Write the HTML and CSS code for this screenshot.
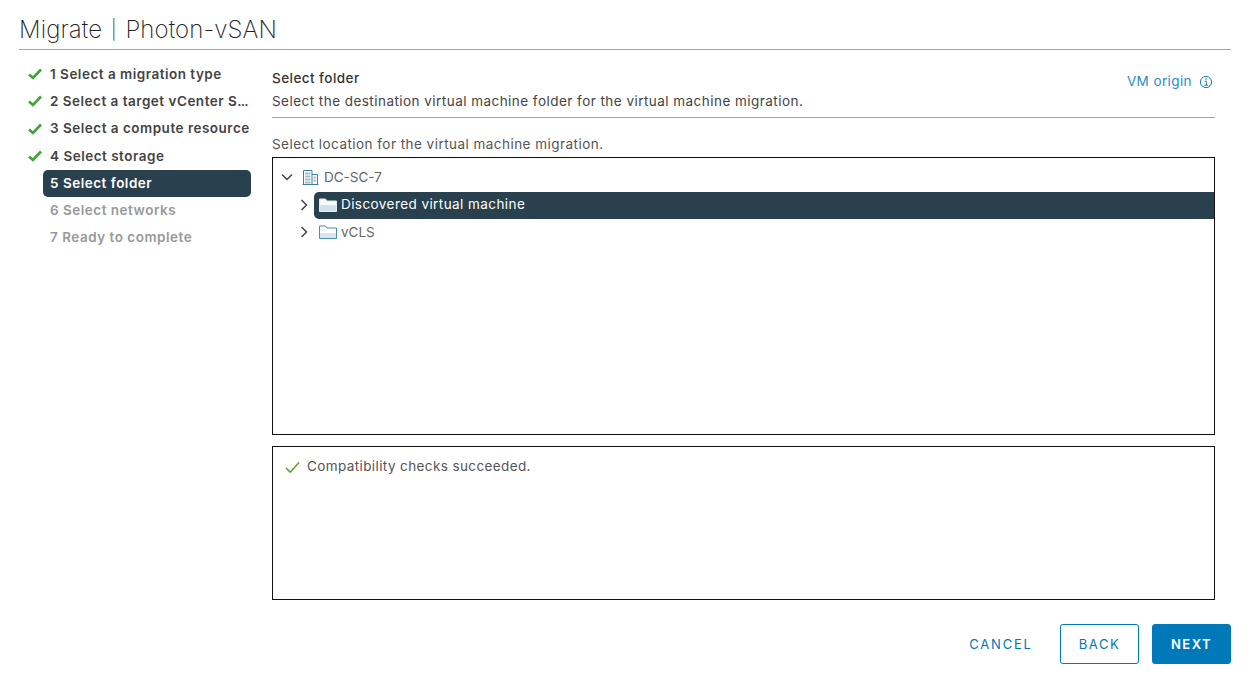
FILE: index.html
```html
<!DOCTYPE html>
<html lang="en">
<head>
<meta charset="UTF-8" />
<title>Migrate | Photon-vSAN</title>
<link rel="stylesheet" href="styles.css">
</head>
<body>
<div class="dialog">
    <h1 class="titulo">Migrate <span class="barra">|</span> Photon-vSAN</h1>
    <div class="corpo">
        <ul class="passos">
            <li class="passo feito"><svg class="check" viewBox="0 0 14 12"><path d="M1 6.500 5 10l8-8.500" /></svg><span>1 Select a migration type</span></li>
            <li class="passo feito"><svg class="check" viewBox="0 0 14 12"><path d="M1 6.500 5 10l8-8.500" /></svg><span>2 Select a target vCenter S<span class="reticencias">...</span></span></li>
            <li class="passo feito"><svg class="check" viewBox="0 0 14 12"><path d="M1 6.500 5 10l8-8.500" /></svg><span>3 Select a compute resource</span></li>
            <li class="passo feito"><svg class="check" viewBox="0 0 14 12"><path d="M1 6.500 5 10l8-8.500" /></svg><span>4 Select storage</span></li>
            <li class="passo ativo"><span>5 Select folder</span></li>
            <li class="passo futuro"><span>6 Select networks</span></li>
            <li class="passo futuro"><span>7 Ready to complete</span></li>
        </ul>
        <div class="conteudo">
            <div class="cabecalho">
                <div>
                    <div class="subtitulo">Select folder</div>
                    <div class="descricao">Select the destination virtual machine folder for the virtual machine migration.</div>
                </div>
                <a class="origem">VM origin
                    <svg class="info" viewBox="0 0 14 14"><circle cx="7" cy="7" r="5.600" /><path d="M5.600 6.200H7.300V10M5.200 10.200H9" /><path class="ponto" d="M6.300 3.400h1.400v1.400H6.300z" /></svg>
                </a>
            </div>
            <div class="rotulo">Select location for the virtual machine migration.</div>
            <div class="arvore">
                <div class="no nivel0">
                    <svg class="seta" viewBox="0 0 12 12"><path d="M1 3.500 6 8.500l5-5" /></svg>
                    <svg class="icone-dc" viewBox="0 0 17 16">
                        <path class="traco" d="M1.500 15V1.500H10V15M10 5.500h5.500V15M.5 15.500h16" />
                        <path class="janelas" d="M3 3.500h5.500v2H3zM3 6.500h5.500v2H3zM3 9.500h5.500v2H3zM3 12.500h5.500v2H3zM11.500 7.500h2.500v2h-2.500zM11.500 10.500h2.500v2h-2.500z" />
                    </svg>
                    <span>DC-SC-7</span>
                </div>
                <div class="no nivel1">
                    <svg class="seta" viewBox="0 0 12 12"><path d="M3.500 1 8.500 6l-5 5" /></svg>
                    <div class="selecionado">
                        <svg class="pasta" viewBox="0 0 18 14"><path class="fundo" d="M.5 13.500V1h6l1.500 2h9.500v10.500z" /><path class="brilho" d="M1 7h16v6H1z" /></svg>
                        <span class="nome">Discovered virtual machine</span>
                    </div>
                </div>
                <div class="no nivel1">
                    <svg class="seta" viewBox="0 0 12 12"><path d="M3.500 1 8.500 6l-5 5" /></svg>
                    <div class="normal">
                        <svg class="pasta" viewBox="0 0 18 14"><path class="fundo" d="M.5 13.500V1h6l1.500 2h9.500v10.500z" /><path class="brilho" d="M1 8h16v5H1z" /></svg>
                        <span>vCLS</span>
                    </div>
                </div>
            </div>
            <div class="status">
                <svg class="ok" viewBox="0 0 16 14"><path d="M1 7.500 5.500 12 15 1.500" /></svg>
                <span>Compatibility checks succeeded.</span>
            </div>
        </div>
    </div>
    <div class="rodape">
        <button class="botao link">CANCEL</button>
        <button class="botao contorno">BACK</button>
        <button class="botao primario">NEXT</button>
    </div>
</div>
</body>
</html>
```

FILE: styles.css
```css
body{
    margin: 0;
    background-color: white;
    font-family: "Inter", "Liberation Sans", sans-serif;
    color: #444;
    overflow: hidden;
}
.dialog{
    width: 1245px;
    height: 675px;
    padding: 0 14px 0 19px;
    box-sizing: border-box;
    display: flex;
    flex-direction: column;
}
.titulo{
    margin: 0;
    height: 50px;
    box-sizing: border-box;
    padding-top: 14px;
    line-height: 32px;
    font-size: 24px;
    font-weight: 200;
    letter-spacing: 0.1px;
    color: #222;
    border-bottom: 1px solid #a6a6a6;
    flex: none;
}
.barra{
    font-size: 19px;
    margin: 0 2px;
    vertical-align: 2px;
    color: #333;
}
.corpo{
    display: flex;
    height: 550px;
    flex: none;
}
.passos{
    list-style: none;
    margin: 11px 0 0 0;
    padding: 0;
    width: 253px;
    flex: none;
}
.passo{
    height: 27.25px;
    width: 232px;
    display: flex;
    align-items: center;
    padding-left: 31px;
    padding-bottom: 2px;
    box-sizing: border-box;
    position: relative;
    font-size: 13.500px;
    font-weight: 600;
    letter-spacing: 0.5px;
    color: #444;
    white-space: nowrap;
}
.passo:nth-child(4){
    padding-bottom: 0;
}
.reticencias{
    letter-spacing: -0.8px;
}
.check{
    position: absolute;
    left: 8.500px;
    top: 7px;
    width: 14px;
    height: 12px;
    fill: none;
    stroke: #3fa535;
    stroke-width: 2.600;
}
.ativo{
    background-color: #29414e;
    color: white;
    border-radius: 5px;
    width: 208px;
    margin-left: 24px;
    padding-left: 7px;
}
.futuro{
    color: #999;
}
.conteudo{
    width: 943px;
    flex: none;
}
.cabecalho{
    display: flex;
    justify-content: space-between;
    height: 68px;
    box-sizing: border-box;
    padding-top: 18px;
    border-bottom: 1px solid #a6a6a6;
}
.subtitulo{
    font-size: 13.500px;
    font-weight: 500;
    letter-spacing: 0.45px;
    color: #333;
    line-height: 20px;
}
.descricao{
    font-size: 13.500px;
    letter-spacing: 0.46px;
    line-height: 20px;
    margin-top: 3px;
    color: #444;
}
.origem{
    font-size: 13.500px;
    letter-spacing: 0.4px;
    color: #2a8dc5;
    display: flex;
    align-items: flex-start;
    gap: 7px;
    padding-right: 2px;
    padding-top: 1px;
    line-height: 24px;
}
.info{
    width: 14px;
    height: 14px;
    margin-top: 6px;
    fill: none;
    stroke: #1c7cb5;
    stroke-width: 1;
}
.info .ponto{
    fill: #1c7cb5;
    stroke: none;
}
.rotulo{
    font-size: 13.500px;
    letter-spacing: 0.46px;
    line-height: 20px;
    margin-top: 16px;
    color: #555;
}
.arvore{
    margin-top: 3px;
    height: 278px;
    box-sizing: border-box;
    border: 1px solid #111;
    padding-top: 5px;
}
.no{
    height: 27px;
    display: flex;
    align-items: center;
    font-size: 13.500px;
    color: #666;
}
.nivel0{
    padding-left: 8px;
    margin-bottom: 2px;
}
.nivel1{
    padding-left: 25px;
    box-sizing: border-box;
}
.seta{
    width: 12px;
    height: 12px;
    fill: none;
    stroke: #444;
    stroke-width: 1.500;
    flex: none;
}
.nivel1 .seta{
    margin-bottom: 2px;
}
.icone-dc{
    width: 17px;
    height: 16px;
    margin-left: 9px;
    margin-right: 5px;
}
.icone-dc .traco{
    fill: none;
    stroke: #3f7fa5;
}
.icone-dc .janelas{
    fill: #a9bcc9;
}
.selecionado, .normal{
    flex: 1;
    height: 27px;
    box-sizing: border-box;
    margin-left: 4px;
    padding-left: 5px;
    padding-bottom: 2px;
    display: flex;
    align-items: center;
    gap: 4px;
    border-radius: 5px 0 0 5px;
}
.selecionado{
    background-color: #29414e;
    color: white;
    letter-spacing: 0.43px;
}
.nome{
    margin-bottom: 2px;
}
.pasta{
    width: 18px;
    height: 14px;
    flex: none;
}
.selecionado .fundo{
    fill: #f7f9fa;
    stroke: #e3eaef;
}
.selecionado .brilho{
    fill: #d5e2ea;
}
.normal .fundo{
    fill: white;
    stroke: #4b8db0;
}
.normal .brilho{
    fill: #dbe7ef;
}
.status{
    margin-top: 11px;
    height: 154px;
    box-sizing: border-box;
    border: 1px solid #111;
    padding: 10px 12px;
    display: flex;
    align-items: flex-start;
    gap: 7px;
    font-size: 13.500px;
    letter-spacing: 0.39px;
    line-height: 19px;
    color: #555;
}
.ok{
    width: 15px;
    height: 13px;
    margin-top: 4px;
    fill: none;
    stroke: #5aa220;
    stroke-width: 1.600;
    flex: none;
}
.rodape{
    display: flex;
    justify-content: flex-end;
    margin-top: 24px;
}
.botao{
    height: 40px;
    width: 79px;
    box-sizing: border-box;
    border-radius: 3px;
    font-family: inherit;
    font-size: 13px;
    letter-spacing: 1.5px;
    background-color: white;
    border: 1px solid #0079b8;
    color: #0079b8;
    margin-left: 13px;
    padding: 0;
}
.link{
    border: none;
    width: 90px;
    margin-right: 14px;
    letter-spacing: 1.800px;
}
.contorno{
    margin-left: 0;
}
.primario{
    background-color: #0079b8;
    color: white;
    font-weight: 600;
}
```
